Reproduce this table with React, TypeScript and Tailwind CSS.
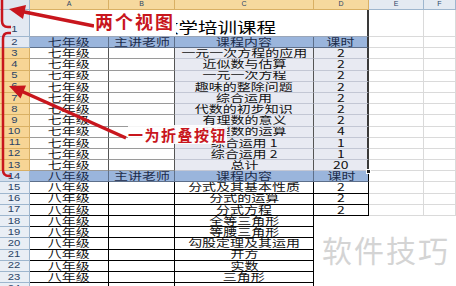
import React from 'react'

type Kind = 'title' | 'head' | 'b1' | 'b2'

interface RowData {
  n: number
  kind: Kind
  a?: string
  c?: string
  d?: string
}

const rows: RowData[] = [
  { n: 1, kind: 'title' },
  { n: 2, kind: 'head', a: '七年级' },
  { n: 3, kind: 'b1', a: '七年级', c: '一元一次方程的应用', d: '2' },
  { n: 4, kind: 'b1', a: '七年级', c: '近似数与估算', d: '2' },
  { n: 5, kind: 'b1', a: '七年级', c: '一元一次方程', d: '2' },
  { n: 6, kind: 'b1', a: '七年级', c: '趣味的整除问题', d: '2' },
  { n: 7, kind: 'b1', a: '七年级', c: '综合运用', d: '2' },
  { n: 8, kind: 'b1', a: '七年级', c: '代数的初步知识', d: '2' },
  { n: 9, kind: 'b1', a: '七年级', c: '有理数的意义', d: '2' },
  { n: 10, kind: 'b1', a: '七年级', c: '有理数的运算', d: '4' },
  { n: 11, kind: 'b1', a: '七年级', c: '综合运用 1', d: '1' },
  { n: 12, kind: 'b1', a: '七年级', c: '综合运用 2', d: '1' },
  { n: 13, kind: 'b1', a: '七年级', c: '总计', d: '20' },
  { n: 14, kind: 'head', a: '八年级' },
  { n: 15, kind: 'b2', a: '八年级', c: '分式及其基本性质', d: '2' },
  { n: 16, kind: 'b2', a: '八年级', c: '分式的运算', d: '2' },
  { n: 17, kind: 'b2', a: '八年级', c: '分式方程', d: '2' },
  { n: 18, kind: 'b2', a: '八年级', c: '全等三角形' },
  { n: 19, kind: 'b2', a: '八年级', c: '等腰三角形' },
  { n: 20, kind: 'b2', a: '八年级', c: '勾股定理及其运用' },
  { n: 21, kind: 'b2', a: '八年级', c: '开方' },
  { n: 22, kind: 'b2', a: '八年级', c: '实数' },
  { n: 23, kind: 'b2', a: '八年级', c: '三角形' },
  { n: 24, kind: 'b2', a: '', c: '' },
]

// the screenshot is stretched sideways, so every cell text gets a horizontal scale
function T({ children }: { children?: React.ReactNode }) {
  return <span className="inline-block scale-x-[1.33] whitespace-nowrap leading-none">{children}</span>
}

function rowHeadBg(n: number) {
  if (n >= 3 && n <= 13) return 'bg-[#f7d595] border-[#d9b064]'
  if (n === 14) return 'bg-[#d3deec] border-[#9eb6ce]'
  if (n <= 2) return 'bg-[#e3e9f2] border-[#9eb6ce]'
  return 'bg-[#e9eef5] border-[#9eb6ce]'
}

function Row({ r }: { r: RowData }) {
  const cell = 'flex items-center justify-center overflow-hidden'
  const grid = 'border-r border-b border-[#dadada] bg-white'
  const hasD = r.kind !== 'b2' || r.n <= 17
  const isTitle = r.kind === 'title'

  return (
    <div className={`flex ${isTitle ? 'h-[27px]' : 'h-[11.2px]'}`}>
      <div
        className={`w-[30px] shrink-0 border-r border-b text-[9px] text-[#2b4466] font-['Liberation_Sans',sans-serif] flex justify-center overflow-hidden ${
          isTitle ? 'items-end pb-[2px]' : 'items-center'
        } ${rowHeadBg(r.n)}`}
      >
        <span className="inline-block scale-x-125 leading-none">{r.n}</span>
      </div>

      {isTitle && (
        <div className="w-[339px] shrink-0 border-r-2 border-r-[#3a3a3a] border-b border-b-[#9aa6b8] bg-white text-[15px] text-black flex items-end justify-center pb-[2px]">
          <span className="inline-block scale-x-[1.3] whitespace-nowrap leading-none">初中数学培训课程</span>
        </div>
      )}

      {r.kind === 'head' && (
        <>
          <div className={`w-[79px] shrink-0 bg-[#9ab5dc] border-r border-b border-[#5d6f8a] text-[#1c2c4a] ${cell}`}><T>{r.a}</T></div>
          <div className={`w-[66px] shrink-0 bg-[#9ab5dc] border-r border-b border-[#5d6f8a] text-[#1c2c4a] ${cell}`}><T>主讲老师</T></div>
          <div className={`w-[139px] shrink-0 bg-[#9ab5dc] border-r border-b border-[#5d6f8a] text-[#1c2c4a] ${cell}`}><T>课程内容</T></div>
          <div className={`w-[55px] shrink-0 bg-[#9ab5dc] border-b border-[#5d6f8a] text-[#1c2c4a] ${cell} ${r.n === 2 ? 'border-r-2 border-r-[#3a3a3a]' : 'border-r border-r-black'}`}><T>课时</T></div>
        </>
      )}

      {r.kind === 'b1' && (
        <>
          <div className={`w-[79px] shrink-0 bg-white border-r border-r-[#555] border-b border-b-[#9a9a9a] ${cell}`}><T>{r.a}</T></div>
          <div className={`w-[66px] shrink-0 bg-white border-r border-r-[#555] border-b border-b-[#9a9a9a] ${cell}`} />
          <div className={`w-[139px] shrink-0 bg-[#e8eaf2] border-r border-r-[#555] border-b border-b-[#c3c7d4] ${cell}`}><T>{r.c}</T></div>
          <div className={`w-[55px] shrink-0 bg-[#e8eaf2] border-r-2 border-r-[#3a3a3a] border-b border-b-[#c3c7d4] ${cell}`}><T>{r.d}</T></div>
        </>
      )}

      {r.kind === 'b2' && (
        <>
          <div className={`w-[79px] shrink-0 bg-white border-r border-b border-black ${cell}`}><T>{r.a}</T></div>
          <div className={`w-[66px] shrink-0 bg-white border-r border-b border-black ${cell}`} />
          <div className={`w-[139px] shrink-0 bg-white border-r border-b border-black ${cell}`}><T>{r.c}</T></div>
          <div className={`w-[55px] shrink-0 bg-white ${hasD ? 'border-r border-b border-black' : ''} ${cell}`}><T>{r.d}</T></div>
        </>
      )}

      <div className={`w-[55px] shrink-0 ${hasD ? grid : 'bg-white'}`} />
      <div className={`flex-1 ${hasD ? grid : 'bg-white'}`} />
    </div>
  )
}

export default function App() {
  const colHead = 'flex items-center justify-center border-r border-b text-[7px] text-[#2b4466] font-[\'Liberation_Sans\',sans-serif]'
  return (
    <div className="relative w-[456px] h-[286px] overflow-hidden bg-white text-[10.5px] text-[#111] font-['Noto_Sans_CJK_SC',sans-serif]">
      {/* column headers */}
      <div className="flex h-[10px]">
        <div className="w-[30px] shrink-0 border-r border-b border-[#9eb6ce] bg-[#dfe6ef]" />
        <div className={`w-[79px] shrink-0 bg-[#f6d99e] border-[#d9b064] ${colHead}`}>A</div>
        <div className={`w-[66px] shrink-0 bg-[#f6d99e] border-[#d9b064] ${colHead}`}>B</div>
        <div className={`w-[139px] shrink-0 bg-[#f6d99e] border-[#d9b064] ${colHead}`}>C</div>
        <div className={`w-[55px] shrink-0 bg-[#f6d99e] border-[#d9b064] ${colHead}`}>D</div>
        <div className={`w-[55px] shrink-0 bg-[#e4eaf2] border-[#9eb6ce] ${colHead}`}>E</div>
        <div className={`flex-1 bg-[#e4eaf2] border-[#9eb6ce] ${colHead}`}>F</div>
      </div>

      {rows.map((r) => (
        <Row key={r.n} r={r} />
      ))}

      {/* fill handle */}
      <div className="absolute left-[366px] top-[169px] w-[5px] h-[5px] bg-[#222] border border-white" />

      {/* annotations */}
      <svg className="absolute left-0 top-0 pointer-events-none" width="456" height="286" viewBox="0 0 456 286">
        <path d="M2,-4 L2,21 Q2,27 8,27 L11,27" fill="none" stroke="#c8161d" strokeWidth="2.5" />
        <path d="M11,33 L8,33 Q3,33 3,39 L3,170 Q3,176 9,176 L11,176" fill="none" stroke="#c8161d" strokeWidth="2.5" />
        <line x1="94" y1="26" x2="22" y2="11.5" stroke="#c8161d" strokeWidth="3.5" />
        <polygon points="9,9 26,5 23,19" fill="#c8161d" />
        <line x1="126" y1="138" x2="21" y2="91" stroke="#c8161d" strokeWidth="3.5" />
        <polygon points="9,86 26,85.5 20.5,98.5" fill="#c8161d" />
      </svg>

      <div className="absolute left-[94px] top-[10px] bg-white px-[1px] pb-[4px] text-[18px] leading-[22px] font-bold tracking-[2px] text-[#c8161d] [text-shadow:0_0_1px_#fff,0_0_2px_#fff]">
        两个视图
      </div>
      <div className="absolute left-[128px] top-[125px] bg-white/90 text-[15px] leading-[19px] font-bold tracking-[1.5px] text-[#c8161d] [text-shadow:0_0_1px_#fff,0_0_2px_#fff]">
        一为折叠按钮
      </div>

      <div className="absolute left-[322px] top-[231px] text-[30px] leading-[36px] tracking-[2px] text-[#d4d4d4]">
        软件技巧
      </div>
    </div>
  )
}
